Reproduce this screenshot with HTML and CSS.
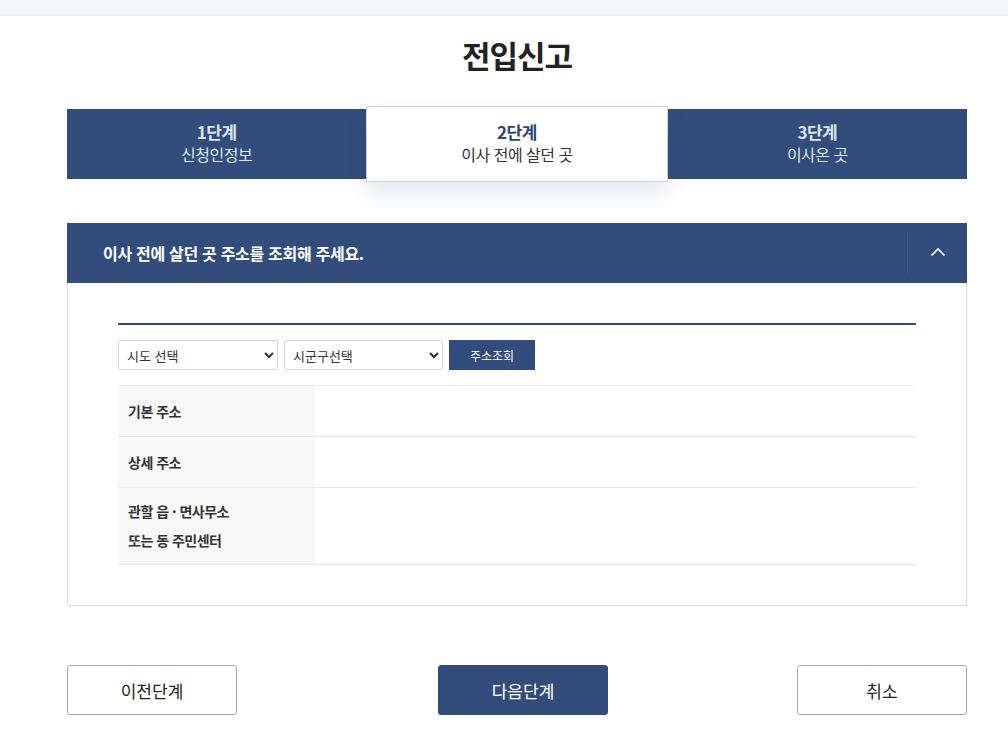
FILE: index.html
```html
<!DOCTYPE html>
<html lang="ko">
<head>
    <meta charset="UTF-8">
    <meta name="viewport" content="width=device-width, initial-scale=1.0">
    <title>전입신고</title>
    <link rel="stylesheet" href="styles.css">
</head>
<body>
    <div class="top-bar"></div>
    <div class="wrap">
        <h1 class="page-title">전입신고</h1>
        <ul class="steps">
            <li>
                <strong>1단계</strong>
                <span>신청인정보</span>
            </li>
            <li class="on">
                <strong>2단계</strong>
                <span>이사 전에 살던 곳</span>
            </li>
            <li>
                <strong>3단계</strong>
                <span>이사온 곳</span>
            </li>
        </ul>
        <div class="panel">
            <div class="panel-head">
                <h2>이사 전에 살던 곳 주소를 조회해 주세요.</h2>
                <button type="button" class="toggle" aria-label="접기">
                    <svg width="16" height="10" viewBox="0 0 16 10"><path d="M1.5 8.5 L8 2 L14.5 8.5" fill="none" stroke="#fff" stroke-width="1.6"/></svg>
                </button>
            </div>
            <div class="panel-body">
                <div class="search-row">
                    <select class="sel">
                        <option>시도 선택</option>
                    </select>
                    <select class="sel">
                        <option>시군구선택</option>
                    </select>
                    <button type="button" class="search-btn">주소조회</button>
                </div>
                <table class="addr-table">
                    <tr>
                        <th>기본 주소</th>
                        <td></td>
                    </tr>
                    <tr>
                        <th>상세 주소</th>
                        <td></td>
                    </tr>
                    <tr class="tall">
                        <th>관할 읍 · 면사무소<br>또는 동 주민센터</th>
                        <td></td>
                    </tr>
                </table>
            </div>
        </div>
        <div class="btn-area">
            <button type="button" class="btn">이전단계</button>
            <button type="button" class="btn primary">다음단계</button>
            <button type="button" class="btn last">취소</button>
        </div>
    </div>
</body>
</html>
```

FILE: styles.css
```css
body {
    margin: 0;
    font-family: "Noto Sans CJK KR", "Noto Sans", sans-serif;
    color: #222;
    background: #fff;
}
.top-bar {
    height: 15px;
    background-color: #f5f6f8;
    border-bottom: 1px solid #e6e8eb;
}
.wrap {
    width: 900px;
    margin-left: 67px;
}
.page-title {
    margin: 19px 0 0;
    height: 74px;
    font-size: 31px;
    font-weight: 700;
    line-height: 40px;
    text-align: center;
    letter-spacing: -1px;
    color: #222;
}
.steps {
    display: flex;
    list-style: none;
    margin: 0;
    padding: 0;
    height: 70px;
    background-color: #324d7b;
}
.steps li {
    flex: 1;
    display: flex;
    flex-direction: column;
    align-items: center;
    justify-content: center;
    color: #dfe5ef;
    padding-bottom: 3px;
}
.steps li strong {
    font-size: 17px;
    font-weight: 700;
    line-height: 22px;
    letter-spacing: -0.5px;
}
.steps li span {
    font-size: 16px;
    line-height: 22px;
    letter-spacing: -0.5px;
}
.steps li.on {
    margin: -3px 0;
    background-color: #fff;
    border: 1px solid #cfd3da;
    color: #2f3e5c;
    box-shadow: 0 10px 20px rgba(40, 60, 100, 0.12);
    z-index: 1;
}
.steps li.on strong {
    color: #2e4470;
}
.steps li.on span {
    color: #333;
}
.panel {
    margin-top: 44px;
    border: 1px solid #dcdcdc;
    border-top: none;
}
.panel-head {
    display: flex;
    align-items: center;
    height: 60px;
    margin: 0 -1px;
    background-color: #324d7b;
}
.panel-head h2 {
    flex: 1;
    margin: 0;
    padding-left: 36px;
    font-size: 16px;
    font-weight: 700;
    color: #fff;
    letter-spacing: -0.3px;
}
.toggle {
    width: 60px;
    height: 40px;
    border: none;
    border-left: 1px solid #41598a;
    background: none;
    display: flex;
    align-items: center;
    justify-content: center;
    padding: 0 0 2px;
    cursor: pointer;
}
.panel-body {
    padding: 40px 50px 40px 50px;
}
.search-row {
    display: flex;
    gap: 6px;
    border-top: 2px solid #324d7b;
    padding-top: 15px;
}
.sel {
    width: 160px;
    height: 30px;
    border: 1px solid #d6d6d6;
    border-radius: 2px;
    background: #fff;
    font-family: inherit;
    font-size: 13px;
    color: #333;
    padding: 0 4px;
}
.sel + .sel {
    width: 159px;
}
.search-btn {
    width: 86px;
    height: 30px;
    border: none;
    background-color: #324d7b;
    color: #fff;
    font-family: inherit;
    font-size: 12px;
    cursor: pointer;
}
.addr-table {
    width: 100%;
    margin-top: 15px;
    border-collapse: collapse;
    border-top: 1px solid #ebebeb;
}
.addr-table tr {
    height: 51px;
    border-bottom: 1px solid #e8e8e8;
}
.addr-table tr.tall {
    height: 77px;
}
.addr-table th {
    width: 187px;
    padding: 0 0 0 10px;
    background-color: #f8f8f8;
    text-align: left;
    font-size: 14px;
    font-weight: 700;
    line-height: 29px;
    color: #333;
    letter-spacing: -0.5px;
}
.btn-area {
    display: flex;
    margin-top: 59px;
}
.btn {
    width: 170px;
    height: 50px;
    border: 1px solid #a9a9a9;
    border-radius: 3px;
    background: #fff;
    font-family: inherit;
    font-size: 17px;
    color: #222;
    cursor: pointer;
}
.btn.primary {
    margin-left: 201px;
    border-color: #324d7b;
    background-color: #324d7b;
    color: #fff;
}
.btn.last {
    margin-left: auto;
}
```
